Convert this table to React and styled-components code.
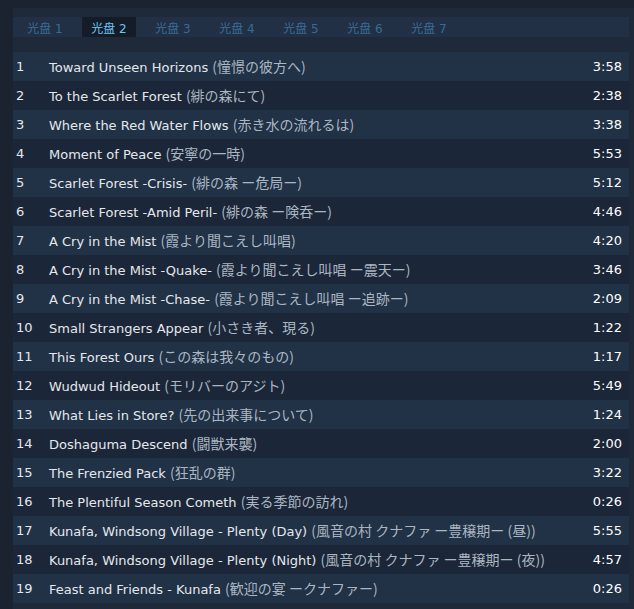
import React, { useState } from 'react'
import styled, { createGlobalStyle } from 'styled-components'

const Global = createGlobalStyle`
  body {
    margin: 0;
    background: #1b2230;
    font-family: "DejaVu Sans", "Noto Sans CJK JP", sans-serif;
  }
`

const Page = styled.div`
  padding: 8px 0 0 13px;
  height: 609px;
  box-sizing: border-box;
  overflow: hidden;
`

const Panel = styled.div`
  background: #1e2939;
  padding: 9px 5px 6px 0;
`

const Tabs = styled.div`
  display: flex;
  gap: 10px;
  padding-left: 5px;
  background: #213044;
  height: 20px;
`

const Tab = styled.div`
  width: 54px;
  display: flex;
  align-items: center;
  justify-content: center;
  font-size: 12px;
  color: ${({ active }) => (active ? '#6ec4f5' : '#3b6b93')};
  background: ${({ active }) => (active ? '#141c27' : 'transparent')};
  cursor: pointer;
`

const List = styled.div`
  margin-top: 15px;
  display: flex;
  flex-direction: column;
`

const Row = styled.div`
  display: flex;
  align-items: center;
  height: 29px;
  background: ${({ odd }) => (odd ? '#213146' : '#1b2638')};
  font-size: 13px;
  color: #e4e8ec;
`

const Num = styled.span`
  width: 33px;
  padding-left: 3px;
  flex-shrink: 0;
`

const Title = styled.span`
  flex: 1;
  white-space: nowrap;
`

const Jp = styled.span`
  font-family: "Noto Sans CJK JP", sans-serif;
  font-size: 14px;
  line-height: 1;
  color: #aab6c2;
`

const Time = styled.span`
  padding-right: 7px;
  color: #ffffff;
`

const tracks = [
  ['Toward Unseen Horizons', '(憧憬の彼方へ)', '3:58'],
  ['To the Scarlet Forest', '(緋の森にて)', '2:38'],
  ['Where the Red Water Flows', '(赤き水の流れるは)', '3:38'],
  ['Moment of Peace', '(安寧の一時)', '5:53'],
  ['Scarlet Forest -Crisis-', '(緋の森 ー危局ー)', '5:12'],
  ['Scarlet Forest -Amid Peril-', '(緋の森 ー険呑ー)', '4:46'],
  ['A Cry in the Mist', '(霞より聞こえし叫唱)', '4:20'],
  ['A Cry in the Mist -Quake-', '(霞より聞こえし叫唱 ー震天ー)', '3:46'],
  ['A Cry in the Mist -Chase-', '(霞より聞こえし叫唱 ー追跡ー)', '2:09'],
  ['Small Strangers Appear', '(小さき者、現る)', '1:22'],
  ['This Forest Ours', '(この森は我々のもの)', '1:17'],
  ['Wudwud Hideout', '(モリバーのアジト)', '5:49'],
  ['What Lies in Store?', '(先の出来事について)', '1:24'],
  ['Doshaguma Descend', '(闘獣来襲)', '2:00'],
  ['The Frenzied Pack', '(狂乱の群)', '3:22'],
  ['The Plentiful Season Cometh', '(実る季節の訪れ)', '0:26'],
  ['Kunafa, Windsong Village - Plenty (Day)', '(風音の村 クナファ ー豊穣期ー (昼))', '5:55'],
  ['Kunafa, Windsong Village - Plenty (Night)', '(風音の村 クナファ ー豊穣期ー (夜))', '4:57'],
  ['Feast and Friends - Kunafa', '(歓迎の宴 ークナファー)', '0:26'],
]

export default function App() {
  const [disc, setDisc] = useState(2)
  return (
    <Page>
      <Global />
      <Panel>
        <Tabs>
          {[1, 2, 3, 4, 5, 6, 7].map((d) => (
            <Tab key={d} active={d === disc} onClick={() => setDisc(d)}>
              光盘 {d}
            </Tab>
          ))}
        </Tabs>
        <List>
          {tracks.map(([name, jp, time], i) => (
            <Row key={i} odd={i % 2 === 0}>
              <Num>{i + 1}</Num>
              <Title>
                {name} <Jp>{jp}</Jp>
              </Title>
              <Time>{time}</Time>
            </Row>
          ))}
        </List>
      </Panel>
    </Page>
  )
}
